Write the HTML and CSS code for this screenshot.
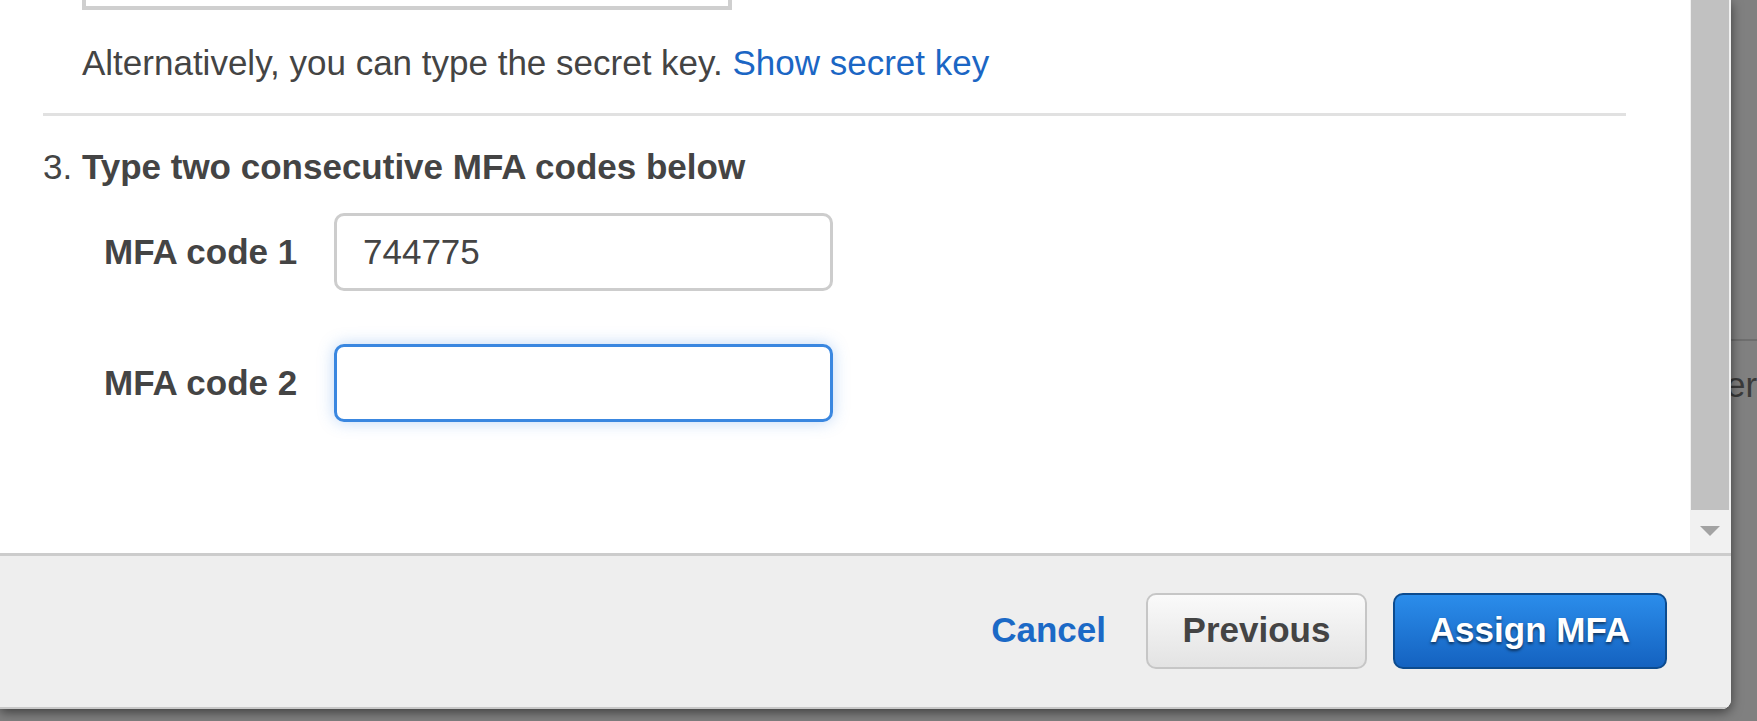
FILE: index.html
```html
<!DOCTYPE html>
<html lang="en">
<head>
<meta charset="utf-8">
<title>Assign MFA</title>
<link rel="stylesheet" href="styles.css">
</head>
<body>
<div class="screen">
  <div class="modal">
    <div class="modal-body">
      <div class="content">
        <div class="step-body">
          <div class="qr-box"></div>
          <p class="alt">Alternatively, you can type the secret key. <a class="link" href="#">Show secret key</a></p>
        </div>
        <div class="divider"></div>
        <h3 class="step-title"><span class="num">3.</span> Type two consecutive MFA codes below</h3>
        <div class="field-row">
          <label class="field-label" for="c1">MFA code 1</label>
          <input class="field-input" id="c1" type="text" value="744775">
        </div>
        <div class="field-row second">
          <label class="field-label" for="c2">MFA code 2</label>
          <input class="field-input focused" id="c2" type="text" value="">
        </div>
      </div>
      <div class="scrollbar">
        <div class="thumb"></div>
        <div class="arrow-box"><span class="arrow"></span></div>
      </div>
    </div>
    <div class="modal-footer">
      <a class="cancel" href="#">Cancel</a>
      <button class="btn btn-secondary" type="button">Previous</button>
      <button class="btn btn-primary" type="button">Assign MFA</button>
    </div>
  </div>
  <div class="backdrop">
    <div class="bg-top"></div>
    <div class="bg-text"><span>er</span></div>
  </div>
</div>
</body>
</html>
```

FILE: styles.css
```css
html, body {
  margin: 0;
  padding: 0;
}
body {
  width: 1757px;
  height: 721px;
  overflow: hidden;
  background: #808080;
  font-family: "Liberation Sans", Arial, Helvetica, sans-serif;
  color: #444444;
}
.screen {
  display: flex;
  align-items: flex-start;
  width: 1757px;
  height: 721px;
}
.modal {
  position: relative;
  z-index: 2;
  width: 1731px;
  height: 709px;
  flex: 0 0 1731px;
  display: flex;
  flex-direction: column;
  background: #ffffff;
  border-bottom-right-radius: 9px;
  box-shadow: 0 3px 12px rgba(0, 0, 0, 0.55);
  overflow: hidden;
}
.modal-body {
  display: flex;
  height: 553px;
  flex: 0 0 553px;
}
.content {
  flex: 1;
  padding: 0 64px 0 43px;
}
.step-body {
  margin-left: 39px;
}
.qr-box {
  box-sizing: content-box;
  width: 642px;
  height: 6px;
  border: 4px solid #cfcfcf;
  border-top: none;
}
.alt {
  margin: 33px 0 0 0;
  font-size: 35px;
  line-height: 40px;
  color: #444444;
}
.link {
  color: #1b66c4;
  text-decoration: none;
}
.divider {
  margin-top: 30px;
  height: 3px;
  background: #e1e1e1;
}
.step-title {
  margin: 31px 0 0 0;
  font-size: 35px;
  line-height: 40px;
  font-weight: bold;
  color: #444444;
}
.step-title .num {
  font-weight: normal;
}
.field-row {
  display: flex;
  align-items: center;
  margin: 26px 0 0 61px;
  height: 78px;
}
.field-row.second {
  margin-top: 53px;
}
.field-label {
  width: 230px;
  flex: 0 0 230px;
  font-size: 35px;
  font-weight: bold;
  color: #444444;
}
.field-input {
  box-sizing: border-box;
  width: 499px;
  height: 78px;
  border: 3px solid #cdcdcd;
  border-radius: 10px;
  padding: 0 0 0 26px;
  font-family: "Liberation Sans", Arial, Helvetica, sans-serif;
  font-size: 35px;
  color: #444444;
  background: #ffffff;
  outline: none;
  margin: 0;
}
.field-input.focused {
  border-color: #3a87e0;
  box-shadow: 0 0 16px rgba(70, 140, 230, 0.35);
}
.scrollbar {
  width: 41px;
  flex: 0 0 41px;
  display: flex;
  flex-direction: column;
  background: #f1f1f1;
}
.thumb {
  height: 510px;
  margin: 0 2px 0 1px;
  background: #c1c1c1;
}
.arrow-box {
  flex: 1;
  display: flex;
  align-items: center;
  justify-content: center;
  padding-right: 2px;
}
.arrow {
  width: 0;
  height: 0;
  border-left: 10px solid transparent;
  border-right: 10px solid transparent;
  border-top: 10px solid #a3a3a3;
  margin-top: -2px;
}
.modal-footer {
  flex: 1;
  display: flex;
  align-items: center;
  justify-content: flex-end;
  background: #eeeeee;
  border-top: 3px solid #cccccc;
  border-bottom: 2px solid #c8c8c8;
  padding-right: 64px;
}
.cancel {
  font-size: 35px;
  font-weight: bold;
  color: #1b69c6;
  text-decoration: none;
  margin-right: 40px;
  padding-bottom: 4px;
}
.btn {
  box-sizing: border-box;
  height: 76px;
  border-radius: 10px;
  font-family: "Liberation Sans", Arial, Helvetica, sans-serif;
  font-size: 35px;
  font-weight: bold;
  padding: 0 34px 3px 34px;
  margin: 0 0 1px 0;
  cursor: pointer;
}
.btn-secondary {
  width: 221px;
  border: 2px solid #c6c6c6;
  background: linear-gradient(#fafafa, #e3e3e3);
  color: #444444;
  margin-right: 26px;
}
.btn-primary {
  width: 274px;
  border: 2px solid #0c4b8e;
  background: linear-gradient(#2b8deb, #1462c0);
  color: #ffffff;
  text-shadow: 0 2px 3px rgba(0, 0, 0, 0.55);
}
.backdrop {
  flex: 1;
  height: 721px;
  position: relative;
  z-index: 1;
}
.bg-top {
  height: 339px;
  border-bottom: 2px solid #6e6e6e;
}
.bg-text {
  margin-top: 24px;
  font-size: 35px;
  line-height: 40px;
  color: #3a3a3a;
  white-space: nowrap;
}
.bg-text span {
  display: inline-block;
  margin-left: -5px;
}
```
